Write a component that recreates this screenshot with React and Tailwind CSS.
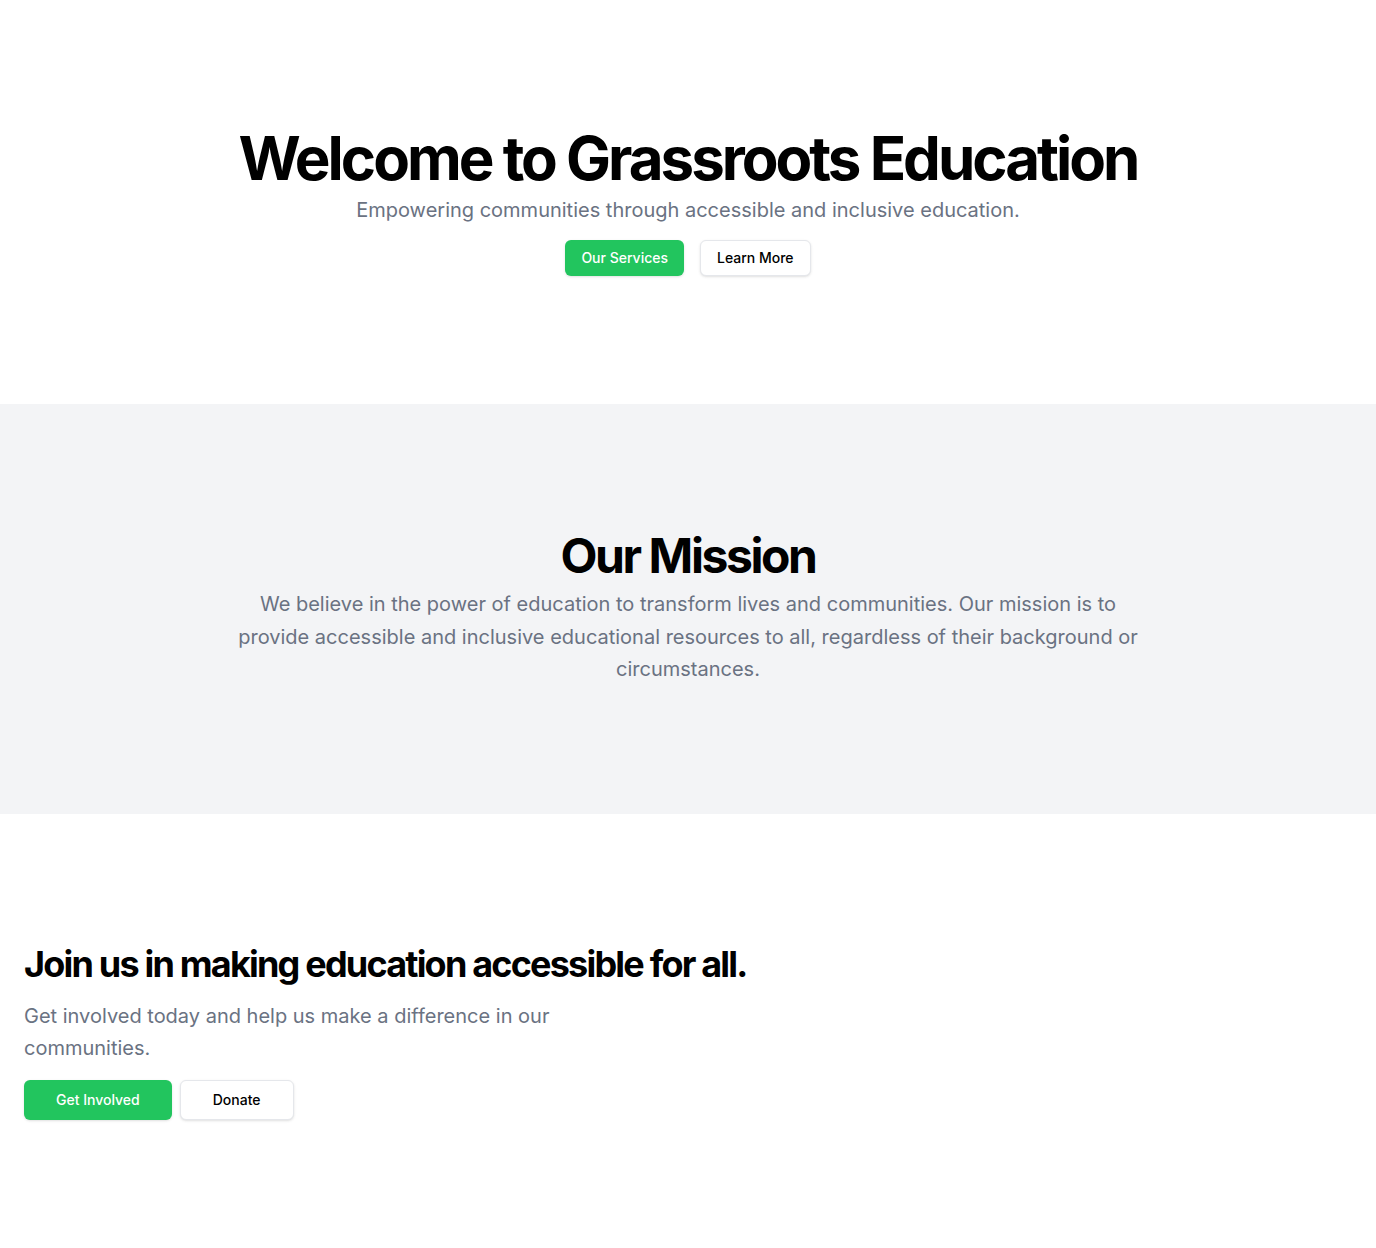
import React from 'react';

export default function App() {
  return (
    <div className="min-h-screen bg-white text-black" style={{ fontFamily: 'Inter, "Noto Sans", sans-serif' }}>
      <section className="w-full pt-32 pb-32">
        <div className="flex flex-col items-center text-center px-6">
          <h1 className="text-6xl font-bold tracking-tighter leading-none">Welcome to Grassroots Education</h1>
          <p className="mt-2 text-xl text-gray-500">Empowering communities through accessible and inclusive education.</p>
          <div className="mt-4 flex gap-4">
            <a href="#" className="inline-flex h-9 items-center rounded-md bg-[#22c55e] px-4 text-sm font-medium text-white shadow">Our Services</a>
            <a href="#" className="inline-flex h-9 items-center rounded-md border border-gray-200 bg-white px-4 text-sm font-medium shadow-sm">Learn More</a>
          </div>
        </div>
      </section>

      <section className="w-full bg-[#f3f4f6] py-32">
        <div className="flex flex-col items-center text-center px-6">
          <h2 className="text-5xl font-bold tracking-tighter">Our Mission</h2>
          <p className="mt-2 max-w-[900px] text-xl leading-relaxed text-gray-500">
            We believe in the power of education to transform lives and communities. Our mission is to provide accessible and inclusive educational resources to all, regardless of their background or circumstances.
          </p>
        </div>
      </section>

      <section className="w-full pt-[130px] pb-32 px-6">
        <h2 className="text-4xl font-bold tracking-tighter">Join us in making education accessible for all.</h2>
        <p className="mt-4 max-w-[600px] text-xl leading-relaxed text-gray-500">
          Get involved today and help us make a difference in our communities.
        </p>
        <div className="mt-[15px] flex gap-2">
          <a href="#" className="inline-flex h-10 items-center rounded-md bg-[#22c55e] px-8 text-sm font-medium text-white shadow">Get Involved</a>
          <a href="#" className="inline-flex h-10 items-center rounded-md border border-gray-200 bg-white px-8 text-sm font-medium shadow-sm">Donate</a>
        </div>
      </section>
    </div>
  );
}
